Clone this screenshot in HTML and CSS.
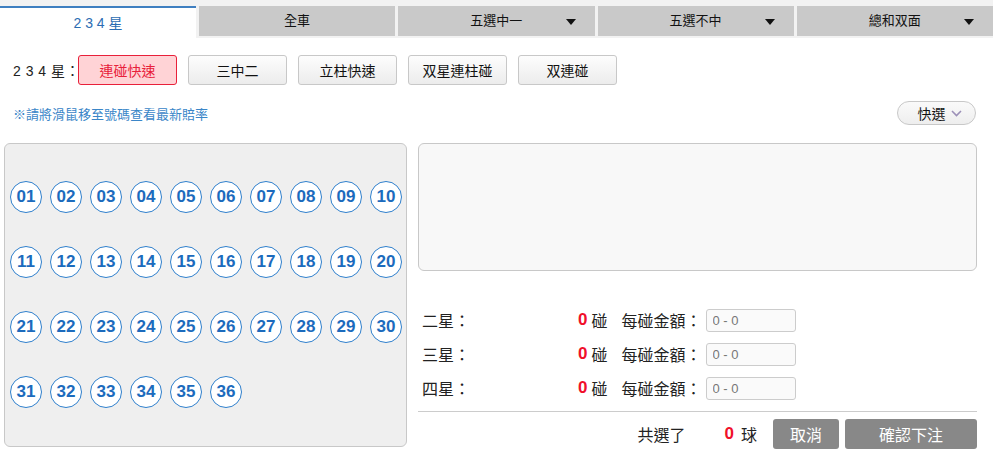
FILE: index.html
```html
<!DOCTYPE html>
<html lang="zh-Hant">
<head>
  <meta charset="UTF-8" />
  <title>234星</title>
  <link rel="stylesheet" href="styles.css">
</head>
<body>

  <!-- Onglets -->
  <div class="tabs">
    <div class="tab active">2 3 4 星</div>
    <div class="tab">全車</div>
    <div class="tab drop">五選中一<span class="caret"></span></div>
    <div class="tab drop">五選不中<span class="caret"></span></div>
    <div class="tab drop">總和双面<span class="caret"></span></div>
  </div>

  <!-- Sous-types -->
  <div class="types">
    <span class="types-label">2 3 4 星：</span>
    <button class="type on">連碰快速</button>
    <button class="type">三中二</button>
    <button class="type">立柱快速</button>
    <button class="type">双星連柱碰</button>
    <button class="type">双連碰</button>
  </div>

  <div class="hint-row">
    <span class="hint">※請將滑鼠移至號碼查看最新賠率</span>
    <button class="quick">快選
      <svg width="11" height="7" viewBox="0 0 11 7"><path d="M1 1 L5.5 5.5 L10 1" fill="none" stroke="#9c90b8" stroke-width="1.6"/></svg>
    </button>
  </div>

  <div class="main">
    <div class="balls" id="balls"></div>

    <div class="side">
      <div class="picked"></div>

      <div class="rows">
        <div class="row">
          <span class="row-label">二星：</span>
          <b class="red">0</b><span class="unit">碰</span>
          <span class="amount-label">每碰金額：</span>
          <input class="amount" type="text" placeholder="0 - 0" />
        </div>
        <div class="row">
          <span class="row-label">三星：</span>
          <b class="red">0</b><span class="unit">碰</span>
          <span class="amount-label">每碰金額：</span>
          <input class="amount" type="text" placeholder="0 - 0" />
        </div>
        <div class="row">
          <span class="row-label">四星：</span>
          <b class="red">0</b><span class="unit">碰</span>
          <span class="amount-label">每碰金額：</span>
          <input class="amount" type="text" placeholder="0 - 0" />
        </div>
      </div>

      <div class="footer">
        <span class="total">共選了</span>
        <b class="red">0</b><span class="unit">球</span>
        <button class="btn cancel">取消</button>
        <button class="btn confirm">確認下注</button>
      </div>
    </div>
  </div>

  <script>
    const zone = document.getElementById("balls");
    for (let i = 1; i <= 36; i++) {
      const b = document.createElement("span");
      b.className = "ball";
      b.textContent = String(i).padStart(2, "0");
      zone.appendChild(b);
    }
  </script>
</body>
</html>
```

FILE: styles.css
```css
body {
  margin: 0;
  font-family: "Liberation Sans", "Noto Sans CJK TC", sans-serif;
  font-size: 13px;
  color: #222;
  background: #fff;
  width: 993px;
}

button {
  font-family: inherit;
  cursor: pointer;
}

/* Onglets */
.tabs {
  display: flex;
  align-items: flex-start;
  gap: 3px;
  height: 38px;
  padding-top: 6px;
  box-sizing: border-box;
  background: #f2f2f2;
}

.tab {
  flex: 1;
  height: 30px;
  line-height: 30px;
  text-align: center;
  background: #c9c9c9;
  color: #111;
  position: relative;
}

.tab.active {
  flex: none;
  width: 196px;
  height: 32px;
  line-height: 30px;
  box-sizing: border-box;
  border-top: 2px solid #3f7fc0;
  background: #fff;
  color: #2b6db3;
  font-size: 14px;
}

.caret {
  position: absolute;
  right: 19px;
  top: 13px;
  border-left: 5px solid transparent;
  border-right: 5px solid transparent;
  border-top: 6px solid #111;
}

/* Sous-types */
.types {
  display: flex;
  align-items: center;
  margin-top: 17px;
  padding-left: 13px;
  height: 30px;
}

.types-label {
  width: 65px;
  flex-shrink: 0;
  white-space: nowrap;
  font-size: 14px;
  letter-spacing: 0.5px;
}

.type {
  width: 99px;
  height: 30px;
  margin-right: 11px;
  font-size: 14px;
  color: #111;
  border: 1px solid #c8c8c8;
  border-radius: 3px;
  background: linear-gradient(to bottom, #fdfdfd, #ececec);
}

.type.on {
  background: #ffd3d6;
  border-color: #e8203a;
  color: #e8203a;
}

.hint-row {
  display: flex;
  align-items: center;
  justify-content: space-between;
  margin-top: 16px;
  padding: 0 17px 0 13px;
  height: 24px;
}

.hint {
  color: #3a86c8;
  font-size: 13px;
}

.quick {
  width: 79px;
  height: 24px;
  border: 1px solid #c8c8c8;
  border-radius: 12px;
  background: linear-gradient(to bottom, #fafafa, #eeeeee);
  font-size: 14px;
  color: #111;
  display: flex;
  align-items: center;
  justify-content: center;
  gap: 5px;
  padding: 0 0 0 6px;
}

/* Zone principale */
.main {
  display: flex;
  margin-top: 18px;
  padding-left: 4px;
  gap: 11px;
}

.balls {
  width: 403px;
  height: 304px;
  box-sizing: border-box;
  background: #efefef;
  border: 1px solid #c8c8c8;
  border-radius: 6px;
  padding: 37px 0 0 5px;
  display: grid;
  grid-template-columns: repeat(10, 32px);
  grid-auto-rows: 32px;
  column-gap: 8px;
  row-gap: 33px;
  align-content: start;
}

.ball {
  width: 32px;
  height: 32px;
  box-sizing: border-box;
  border: 1.5px solid #2f7fcc;
  border-radius: 50%;
  background: #fff;
  color: #1c6bbd;
  font-weight: bold;
  font-size: 17px;
  line-height: 29px;
  text-align: center;
}

.side {
  width: 559px;
}

.picked {
  height: 128px;
  box-sizing: border-box;
  background: #f8f8f8;
  border: 1px solid #c8c8c8;
  border-radius: 6px;
}

.rows {
  margin-top: 32px;
}

.row {
  display: flex;
  align-items: center;
  height: 34px;
  padding-left: 4px;
  font-size: 16px;
  color: #222;
}

.row-label {
  width: 156px;
}

.red {
  color: #f0102a;
  font-size: 17px;
}

.unit {
  margin-left: 4px;
}

.amount-label {
  margin-left: 14px;
}

.amount {
  width: 90px;
  height: 23px;
  box-sizing: border-box;
  margin-left: 4px;
  border: 1px solid #cccccc;
  border-radius: 3px;
  background: #fafafa;
  padding: 0 6px;
  font-family: inherit;
  font-size: 13px;
}

.amount::placeholder {
  color: #777;
}

.footer {
  display: flex;
  align-items: center;
  justify-content: flex-end;
  margin-top: 6px;
  border-top: 1px solid #cccccc;
  padding-top: 7px;
  font-size: 16px;
}

.total {
  margin-right: 39px;
}

.footer .unit {
  margin-left: 7px;
  margin-right: 16px;
}

.btn {
  height: 30px;
  border: none;
  border-radius: 3px;
  background: #888888;
  color: #fff;
  font-size: 16px;
}

.cancel {
  width: 66px;
  margin-right: 6px;
}

.confirm {
  width: 132px;
}
```
